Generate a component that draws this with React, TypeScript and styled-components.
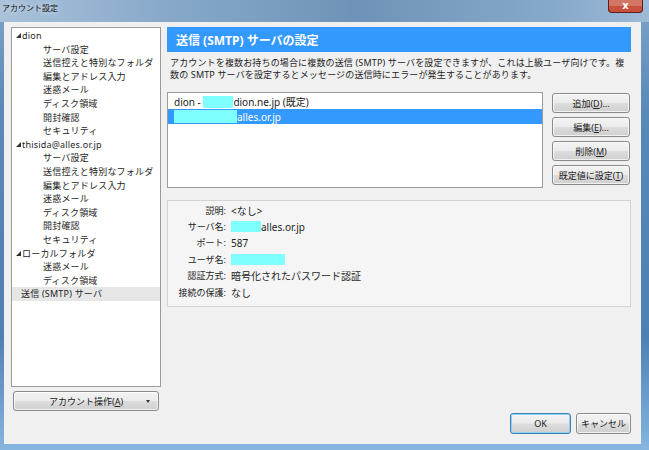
import styled, { createGlobalStyle } from "styled-components";

const GlobalStyle = createGlobalStyle`
  html, body {
    margin: 0;
    padding: 0;
    width: 649px;
    height: 450px;
    overflow: hidden;
  }
  body {
    font-family: "Noto Sans", "Noto Sans CJK JP", sans-serif;
    font-size: 9px;
    color: #1e1e1e;
    background: #5f8cb9;
  }
`;

const Window = styled.div`
  width: 649px;
  height: 450px;
  display: flex;
  flex-direction: column;
  background: linear-gradient(180deg, #7fa3c7 0%, #5a88b7 25%, #4f80b4 75%, #86b5e0 100%);
`;

const TitleBar = styled.div`
  height: 22px;
  flex: none;
  display: flex;
  align-items: flex-start;
  justify-content: space-between;
  padding: 0 6px 0 2px;
  background: linear-gradient(90deg, #a9c2da 0%, #88a9ca 25%, #6f93b8 55%, #86a8ca 85%, #9dbad6 100%);
`;

const Title = styled.span`
  font-size: 8px;
  line-height: 16px;
  color: #111;
  text-shadow: 0 0 6px rgba(255, 255, 255, 0.9);
`;

const CloseButton = styled.span`
  display: block;
  width: 35px;
  height: 13px;
  box-sizing: border-box;
  border: 1px solid #5a2119;
  border-top: none;
  border-radius: 0 0 4px 4px;
  background: #c8503c;
  box-shadow: inset 0 6px 0 rgba(255, 255, 255, 0.22);
  color: #ffffff;
  font-family: "DejaVu Sans", sans-serif;
  font-weight: bold;
  font-size: 10px;
  line-height: 11px;
  text-align: center;
`;

const Body = styled.div`
  flex: 1;
  margin: 0 8px 6px 4px;
  padding: 5px 10px 10px 7px;
  background: #f0f0f0;
  display: flex;
  flex-direction: column;
  gap: 2px;
  min-height: 0;
`;

const Main = styled.div`
  height: 384px;
  display: grid;
  grid-template-columns: 150px 1fr;
  column-gap: 6px;
`;

const LeftColumn = styled.div`
  display: flex;
  flex-direction: column;
  gap: 4px;
`;

const TreeBox = styled.div`
  height: 360px;
  box-sizing: border-box;
  background: #fff;
  border: 1px solid #9a9a9a;
  padding-top: 1px;
`;

const TreeRow = styled.div<{ $indent: number; $active?: boolean }>`
  height: 13.6px;
  line-height: 13.6px;
  display: flex;
  align-items: center;
  padding-left: ${(p) => p.$indent}px;
  background: ${(p) => (p.$active ? "#e6e6e6" : "transparent")};
  white-space: nowrap;
  letter-spacing: 0.2px;
`;

const Toggle = styled.svg`
  width: 5px;
  height: 5px;
  margin-right: 1px;
  flex: none;
`;

const Button = styled.div<{ $primary?: boolean }>`
  box-sizing: border-box;
  height: 20px;
  border: 1px solid ${(p) => (p.$primary ? "#3c7fb1" : "#8a8a8a")};
  border-radius: 3px;
  background: linear-gradient(180deg, #f3f3f3 0%, #ebebeb 48%, #dddddd 52%, #cfcfcf 100%);
  box-shadow: inset 0 0 0 1px ${(p) => (p.$primary ? "#8fd3f2" : "rgba(255,255,255,0.7)")};
  display: flex;
  align-items: center;
  justify-content: center;
  white-space: nowrap;
  color: #222;
`;

const AccountButton = styled(Button)`
  margin: 0 2px;
  position: relative;
`;

const DropArrow = styled.svg`
  position: absolute;
  right: 8px;
  top: 8px;
  width: 4px;
  height: 3px;
`;

const RightColumn = styled.div`
  display: flex;
  flex-direction: column;
`;

const Header = styled.div`
  height: 25px;
  background: #3399ff;
  color: #fff;
  font-weight: bold;
  font-size: 12px;
  display: flex;
  align-items: center;
  padding-left: 9px;
`;

const Description = styled.p`
  margin: 5px 0 11px 3px;
  line-height: 12px;
  letter-spacing: 0.15px;
  white-space: nowrap;
`;

const ServerRow = styled.div`
  display: flex;
  gap: 9px;
  height: 96px;
`;

const ServerList = styled.div`
  width: 376px;
  box-sizing: border-box;
  background: #fff;
  border: 1px solid #9a9a9a;
  padding-top: 1px;
`;

const ServerItem = styled.div<{ $selected?: boolean }>`
  height: 15px;
  display: flex;
  align-items: center;
  padding-left: 6px;
  font-size: 10px;
  background: ${(p) => (p.$selected ? "#3399ff" : "transparent")};
  color: ${(p) => (p.$selected ? "#fff" : "#222")};
`;

const Masked = styled.span<{ $w: number; $h?: number }>`
  display: inline-block;
  width: ${(p) => p.$w}px;
  height: ${(p) => p.$h ?? 12}px;
  background: #80ffff;
`;

const ButtonStack = styled.div`
  width: 78px;
  display: flex;
  flex-direction: column;
  gap: 4px;
  padding-top: 1px;
`;

const Details = styled.div`
  margin-top: 12px;
  border: 1px solid #d4d4d4;
  background: #f5f5f5;
  padding: 1px 0 6px;
  display: grid;
  grid-template-columns: 58px 1fr;
  column-gap: 5px;
  grid-auto-rows: 16.4px;
  align-items: center;
  font-size: 10px;
`;

const Label = styled.span`
  text-align: right;
  font-size: 9px;
  white-space: nowrap;
`;

const Value = styled.span`
  display: flex;
  align-items: center;
  white-space: nowrap;
`;

const Footer = styled.div`
  height: 21px;
  display: flex;
  justify-content: flex-end;
  gap: 5px;
`;

const FooterButton = styled(Button)<{ $w: number }>`
  width: ${(p) => p.$w}px;
  height: 21px;
`;

const tree: { label: string; level: number; toggle?: boolean; active?: boolean }[] = [
  { label: "dion", level: 0, toggle: true },
  { label: "サーバ設定", level: 1 },
  { label: "送信控えと特別なフォルダ", level: 1 },
  { label: "編集とアドレス入力", level: 1 },
  { label: "迷惑メール", level: 1 },
  { label: "ディスク領域", level: 1 },
  { label: "開封確認", level: 1 },
  { label: "セキュリティ", level: 1 },
  { label: "thisida@alles.or.jp", level: 0, toggle: true },
  { label: "サーバ設定", level: 1 },
  { label: "送信控えと特別なフォルダ", level: 1 },
  { label: "編集とアドレス入力", level: 1 },
  { label: "迷惑メール", level: 1 },
  { label: "ディスク領域", level: 1 },
  { label: "開封確認", level: 1 },
  { label: "セキュリティ", level: 1 },
  { label: "ローカルフォルダ", level: 0, toggle: true },
  { label: "迷惑メール", level: 1 },
  { label: "ディスク領域", level: 1 },
  { label: "送信 (SMTP) サーバ", level: 0, active: true },
];

function Mnemonic({ text, k, tail = "" }: { text: string; k: string; tail?: string }) {
  return (
    <span>
      {text}(<u>{k}</u>){tail}
    </span>
  );
}

export default function App() {
  return (
    <>
      <GlobalStyle />
      <Window>
        <TitleBar>
          <Title>アカウント設定</Title>
          <CloseButton>x</CloseButton>
        </TitleBar>
        <Body>
          <Main>
            <LeftColumn>
              <TreeBox>
                {tree.map((item, i) => (
                  <TreeRow
                    key={i}
                    $indent={item.level === 1 ? 31 : item.toggle ? 4 : 9}
                    $active={item.active}
                  >
                    {item.toggle && (
                      <Toggle viewBox="0 0 5 5">
                        <polygon points="5,0 5,5 0,5" fill="#333" />
                      </Toggle>
                    )}
                    {item.label}
                  </TreeRow>
                ))}
              </TreeBox>
              <AccountButton>
                <Mnemonic text="アカウント操作" k="A" />
                <DropArrow viewBox="0 0 4 3">
                  <polygon points="0,0 4,0 2,3" fill="#333" />
                </DropArrow>
              </AccountButton>
            </LeftColumn>
            <RightColumn>
              <Header>送信 (SMTP) サーバの設定</Header>
              <Description>
                アカウントを複数お持ちの場合に複数の送信 (SMTP) サーバを設定できますが、これは上級ユーザ向けです。複
                <br />
                数の SMTP サーバを設定するとメッセージの送信時にエラーが発生することがあります。
              </Description>
              <ServerRow>
                <ServerList>
                  <ServerItem>
                    dion -&nbsp;<Masked $w={30} />dion.ne.jp (既定)
                  </ServerItem>
                  <ServerItem $selected>
                    <Masked $w={63} $h={13} />alles.or.jp
                  </ServerItem>
                </ServerList>
                <ButtonStack>
                  <Button><Mnemonic text="追加" k="D" tail="..." /></Button>
                  <Button><Mnemonic text="編集" k="E" tail="..." /></Button>
                  <Button><Mnemonic text="削除" k="M" /></Button>
                  <Button><Mnemonic text="既定値に設定" k="T" /></Button>
                </ButtonStack>
              </ServerRow>
              <Details>
                <Label>説明:</Label>
                <Value>&lt;なし&gt;</Value>
                <Label>サーバ名:</Label>
                <Value><Masked $w={30} $h={11} />alles.or.jp</Value>
                <Label>ポート:</Label>
                <Value>587</Value>
                <Label>ユーザ名:</Label>
                <Value><Masked $w={54} $h={11} /></Value>
                <Label>認証方式:</Label>
                <Value>暗号化されたパスワード認証</Value>
                <Label>接続の保護:</Label>
                <Value>なし</Value>
              </Details>
            </RightColumn>
          </Main>
          <Footer>
            <FooterButton $w={61} $primary>OK</FooterButton>
            <FooterButton $w={55}>キャンセル</FooterButton>
          </Footer>
        </Body>
      </Window>
    </>
  );
}
